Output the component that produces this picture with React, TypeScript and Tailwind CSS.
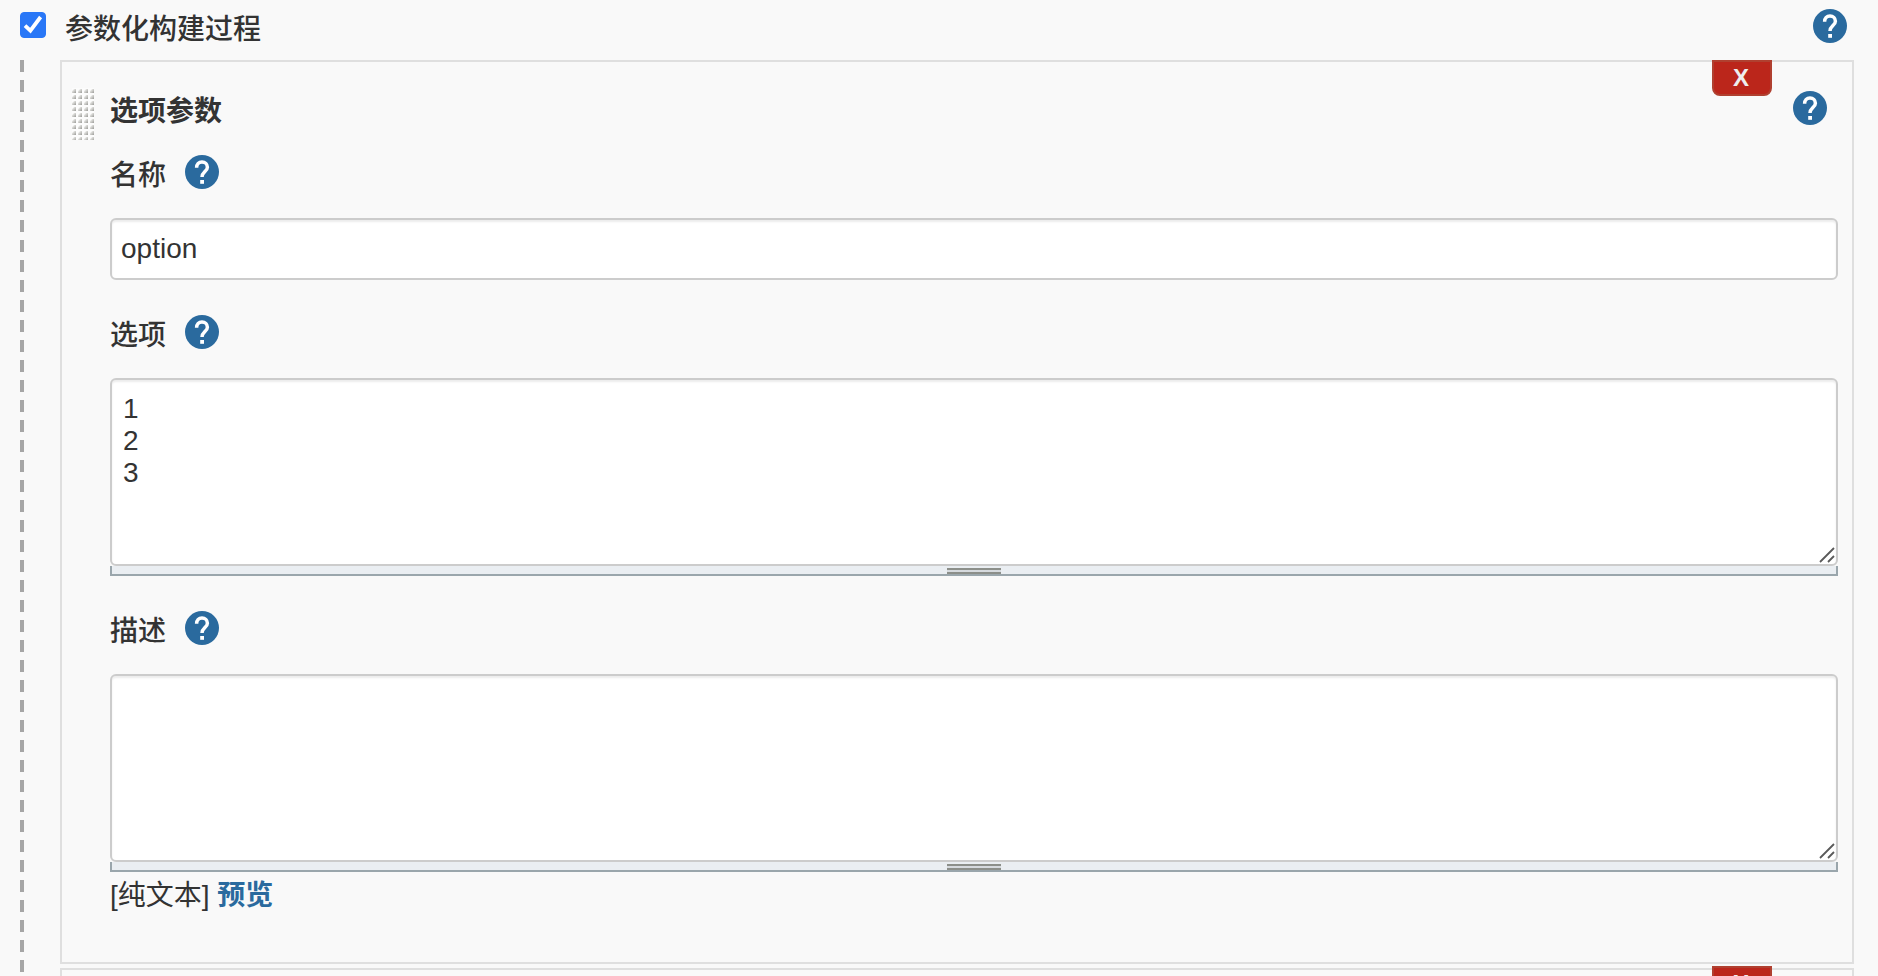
import { ReactNode, useState } from "react";

type HelpProps = {
    label: string;
};

function HelpButton({ label }: HelpProps) {
    return (
        <button
            type="button"
            aria-label={`帮助:${label}`}
            className="block size-[34px] shrink-0 cursor-pointer"
        >
            <svg viewBox="0 0 34 34" className="size-full" aria-hidden="true">
                <circle cx="17" cy="17" r="17" fill="#2a6a9e" />
                <path
                    d="M11.6 12.8C11.6 9.2 13.9 7 17 7s5.4 2.2 5.4 5.2c0 4.2-5.4 4.6-5.4 9.8"
                    fill="none"
                    stroke="#fff"
                    strokeWidth="3.5"
                />
                <rect x="15.2" y="25" width="3.8" height="3.8" fill="#fff" />
            </svg>
        </button>
    );
}

type DeleteProps = {
    raised?: boolean;
};

function DeleteButton({ raised = false }: DeleteProps) {
    return (
        <button
            type="button"
            aria-label="X"
            className={`
                absolute right-20 flex h-9 w-[60px] cursor-pointer items-center justify-center
                rounded-b-lg border-2 border-[#b04030] bg-[#bb261b] pr-0.5
                text-2xl leading-6 font-bold text-[#eeeeee]
                ${raised ? "-top-1" : "-top-0.5"}
            `}
        >
            X
        </button>
    );
}

// Dotted handle used to reorder parameters
function DragGrip() {
    return (
        <svg width="22" height="52" className="mt-[26px] shrink-0" aria-hidden="true">
            <defs>
                <linearGradient id="grip-dot" x1="0" y1="0" x2="1" y2="1">
                    <stop offset="0.2" stopColor="#efefed" />
                    <stop offset="1" stopColor="#999995" />
                </linearGradient>
                <pattern id="grip" x="-2" y="-1" width="6" height="6" patternUnits="userSpaceOnUse">
                    <rect width="6" height="6" fill="#fcfcfc" />
                    <path d="M4 2h2v4H2V4z" fill="url(#grip-dot)" />
                </pattern>
            </defs>
            <rect width="22" height="52" fill="url(#grip)" />
        </svg>
    );
}

type FieldProps = {
    id: string;
    label: string;
    children: ReactNode;
};

function Field({ id, label, children }: FieldProps) {
    return (
        <div>
            <div className="flex h-[34px] items-center gap-[19px]">
                <label htmlFor={id} className="pt-2 leading-8 font-medium">
                    {label}
                </label>
                <HelpButton label={label} />
            </div>
            <div className="mt-[29px]">{children}</div>
        </div>
    );
}

type TextBoxProps = {
    id: string;
    value: string;
    onChange: (next: string) => void;
};

function TextBox({ id, value, onChange }: TextBoxProps) {
    return (
        <div>
            <div className="relative">
                <textarea
                    id={id}
                    value={value}
                    onChange={(e) => onChange(e.target.value)}
                    className="block h-[188px] w-full resize-none rounded-md border-2 border-[#cccccc] bg-white px-[11px] py-[13px] leading-8 shadow-[inset_0_2px_2px_rgba(0,0,0,0.075)] outline-none"
                />
                <svg
                    width="16"
                    height="16"
                    viewBox="0 0 16 16"
                    className="pointer-events-none absolute right-[3px] bottom-[3px]"
                    aria-hidden="true"
                >
                    <path d="M1 15 15 1M9 15l6-6" stroke="#5a5a5a" strokeWidth="1.8" />
                </svg>
            </div>
            <div className="flex h-2.5 cursor-row-resize justify-center border-x-2 border-b-2 border-[#9aa6ac] bg-[#eaeef2] pt-0.5">
                <div className="h-1.5 w-[54px] border-y-2 border-[#8c8f8a] bg-[#d6dade]" />
            </div>
        </div>
    );
}

export default function App() {
    const [enabled, setEnabled] = useState(true);
    const [name, setName] = useState("option");
    const [choices, setChoices] = useState("1\n2\n3");
    const [description, setDescription] = useState("");

    return (
        <main className="flex h-screen flex-col overflow-hidden bg-[#f9f9f9] pr-6 pl-5 font-['Liberation_Sans','Noto_Sans_CJK_SC',sans-serif] text-[28px] text-[#333333]">
            <div className="flex h-[60px] shrink-0 items-start justify-between pr-[7px]">
                <label className="flex items-start gap-[19px]">
                    <span className="relative mt-3 block size-[26px]">
                        <input
                            type="checkbox"
                            checked={enabled}
                            onChange={(e) => setEnabled(e.target.checked)}
                            className="block size-full appearance-none rounded-[4px] border border-[#767676] bg-white checked:border-[#2977f7] checked:bg-[#2977f7]"
                        />
                        {enabled && (
                            <svg
                                viewBox="0 0 26 26"
                                className="pointer-events-none absolute inset-0"
                                aria-hidden="true"
                            >
                                <path
                                    d="M5 13.6 10.4 18.6 20.6 5"
                                    fill="none"
                                    stroke="#fff"
                                    strokeWidth="3.8"
                                />
                            </svg>
                        )}
                    </span>
                    <span className="mt-3.5 leading-8 font-medium">参数化构建过程</span>
                </label>
                <div className="mt-[9px]">
                    <HelpButton label="参数化构建过程" />
                </div>
            </div>

            <div className="flex min-h-0 flex-1">
                <div className="w-1 shrink-0 bg-[repeating-linear-gradient(to_bottom,#a6a6a6_0px,#a6a6a6_12px,transparent_12px,transparent_20px)]" />

                <div className="ml-9 flex min-w-0 flex-1 flex-col gap-1">
                    <section className="relative flex shrink-0 border-2 border-[#dfdfdf] pr-3.5 pb-12 pl-2.5">
                        <DeleteButton />
                        <DragGrip />

                        <div className="ml-4 min-w-0 flex-1">
                            <div className="mt-[29px] flex h-[34px] items-center justify-between pr-[11px]">
                                <h2 className="pt-2 leading-8 font-bold">选项参数</h2>
                                <HelpButton label="选项参数" />
                            </div>

                            <div className="mt-[30px] flex flex-col gap-[35px]">
                                <Field id="param-name" label="名称">
                                    <input
                                        id="param-name"
                                        type="text"
                                        value={name}
                                        onChange={(e) => setName(e.target.value)}
                                        className="block h-[62px] w-full rounded-md border-2 border-[#cccccc] bg-white px-[9px] shadow-[inset_0_2px_2px_rgba(0,0,0,0.075)] outline-none"
                                    />
                                </Field>

                                <Field id="param-choices" label="选项">
                                    <TextBox id="param-choices" value={choices} onChange={setChoices} />
                                </Field>

                                <Field id="param-description" label="描述">
                                    <TextBox
                                        id="param-description"
                                        value={description}
                                        onChange={setDescription}
                                    />
                                </Field>
                            </div>

                            <p className="mt-1.5 leading-9">
                                [纯文本]{" "}
                                <a href="#preview" className="font-bold text-[#2a6a9e]">
                                    预览
                                </a>
                            </p>
                        </div>
                    </section>

                    <section className="relative h-40 shrink-0 border-2 border-[#dfdfdf]">
                        <DeleteButton raised />
                    </section>
                </div>
            </div>
        </main>
    );
}
